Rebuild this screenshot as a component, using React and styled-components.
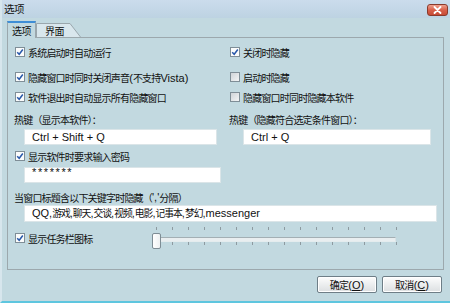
import React from 'react';
import styled, { createGlobalStyle } from 'styled-components';

const Global = createGlobalStyle`
  html, body { margin: 0; padding: 0; }
  body {
    font-family: "Liberation Sans", "Noto Sans CJK SC", sans-serif;
    font-size: 11px;
    color: #111;
    background: #c2d9e0;
  }
`;

const Han = styled.span`
  font-family: "Noto Sans CJK SC", sans-serif;
  font-size: var(--han-size, 10px);
  letter-spacing: var(--han-ls, -0.8px);
`;

const CJK_RE = /([\u3000-\u303f\u3400-\u9fff\uff00-\uffef]+)/;
function mix(text) {
  return text
    .split(CJK_RE)
    .filter(Boolean)
    .map((part, i) =>
      CJK_RE.test(part) ? <Han key={i}>{part}</Han> : <React.Fragment key={i}>{part}</React.Fragment>
    );
}

const Window = styled.div`
  width: 450px;
  height: 303px;
  box-sizing: border-box;
  display: flex;
  flex-direction: column;
  background: #c2d9e0;
  border-left: 2px solid #d7e6ed;
  border-bottom: 2px solid #5ec6df;
  overflow: hidden;
`;

const TitleBar = styled.div`
  height: 18px;
  flex: none;
  display: flex;
  align-items: center;
  justify-content: space-between;
  padding: 0 2px 0 2px;
  background: linear-gradient(#cbdcec, #bdd3e2);
  --han-size: 10.5px;
  --han-ls: -0.4px;
`;

const TitleText = styled.span`
  line-height: 16px;
`;

const CloseButton = styled.div`
  width: 21px;
  height: 12px;
  box-sizing: border-box;
  border: 1px solid #8a3a2c;
  border-radius: 3px;
  background: linear-gradient(#eea08e, #d9604a 50%, #c64a35);
  display: flex;
  align-items: center;
  justify-content: center;
  margin-top: 1px;
`;

const TabStrip = styled.div`
  margin-top: 3px;
  padding-left: 5px;
  height: 16px;
  display: flex;
  align-items: flex-end;
  flex: none;
  --han-size: 10px;
  --han-ls: -0.6px;
`;

const ActiveTab = styled.div`
  position: relative;
  z-index: 1;
  width: 29px;
  height: 17px;
  box-sizing: border-box;
  margin-bottom: -1px;
  border: 1px solid #9aa7ad;
  border-top: 2px solid #3e8ed6;
  border-bottom: none;
  background: #c2d9e0;
  display: flex;
  align-items: center;
  justify-content: center;
  padding-bottom: 1px;
`;

const InactiveTab = styled.div`
  position: relative;
  width: 45px;
  height: 14px;
  display: flex;
  align-items: center;
  padding-left: 9px;
  box-sizing: border-box;
`;

const TabShape = styled.svg`
  position: absolute;
  left: 0;
  top: 0;
`;

const TabLabel = styled.span`
  position: relative;
`;

const Panel = styled.div`
  margin-left: 5px;
  width: 437px;
  height: 233px;
  flex: none;
  box-sizing: border-box;
  border: 1px solid #9ca8ad;
  padding: 6px 0 0 7px;
  display: flex;
  flex-direction: column;
`;

const TwoCol = styled.div`
  display: grid;
  grid-template-columns: 215px 1fr;
  margin-top: ${(p) => p.$mt || 0}px;
`;

const CheckRow = styled.label`
  display: flex;
  align-items: center;
  height: 16px;
  gap: 3px;
  margin-top: ${(p) => p.$mt || 0}px;
  white-space: nowrap;
`;

const Box = styled.span`
  width: 10px;
  height: 10px;
  flex: none;
  box-sizing: border-box;
  border: 1px solid #7f8e97;
  background: ${(p) => (p.$checked ? '#fbfcfc' : 'linear-gradient(135deg, #cfd4d8, #f4f5f6)')};
  display: flex;
  align-items: center;
  justify-content: center;
`;

const Label = styled.div`
  height: 16px;
  display: flex;
  align-items: center;
  white-space: nowrap;
  margin-left: ${(p) => p.$ml || 0}px;
  margin-top: ${(p) => p.$mt || 0}px;
`;

const Field = styled.div`
  height: ${(p) => p.$h || 16}px;
  width: ${(p) => p.$w}px;
  margin-left: ${(p) => p.$ml}px;
  margin-top: ${(p) => p.$mt || 0}px;
  box-sizing: border-box;
  background: #fff;
  border: 1px solid #dbe5e8;
  padding-left: 7px;
  line-height: ${(p) => (p.$h || 16) - 2}px;
  font-size: 11px;
  white-space: nowrap;
  overflow: hidden;
  --han-size: 9.8px;
  --han-ls: -1px;
`;

const Masked = styled.span`
  letter-spacing: 1.6px;
  line-height: 9px;
  display: block;
  font-size: 11px;
`;

const SliderRow = styled.div`
  display: grid;
  grid-template-columns: 137px 1fr;
  height: 28px;
  align-items: start;
`;

const Slider = styled.div`
  position: relative;
  width: 246px;
  height: 28px;
`;

const Ticks = styled.div`
  position: absolute;
  left: 4px;
  top: ${(p) => p.$top}px;
  width: 241px;
  height: 3px;
  background: repeating-linear-gradient(90deg, #8d9aa0 0 1px, transparent 1px 16px);
`;

const Track = styled.div`
  position: absolute;
  left: 3px;
  top: 15px;
  width: 241px;
  height: 5px;
  box-sizing: border-box;
  border: 1px solid #a3afb4;
  border-right-color: #d9e3e6;
  border-bottom-color: #e4ecee;
  background: #e9eef0;
`;

const Thumb = styled.div`
  position: absolute;
  left: 0;
  top: 11px;
  width: 9px;
  height: 16px;
  box-sizing: border-box;
  border: 1px solid #7e8d95;
  border-radius: 2px;
  background: linear-gradient(90deg, #ffffff, #eef1f2);
`;

const ButtonBar = styled.div`
  display: flex;
  justify-content: flex-end;
  gap: 5px;
  margin-top: 6px;
  padding-right: 8px;
  --han-size: 10px;
  --han-ls: -0.7px;
`;

const Button = styled.div`
  width: 60px;
  height: 17px;
  box-sizing: border-box;
  border: 1px solid #6e7e87;
  border-radius: 2px;
  background: linear-gradient(#fdfdfd, #eceeef 50%, #dcdfe1);
  box-shadow: inset 0 0 0 1px #ffffff;
  display: flex;
  align-items: center;
  justify-content: center;
  white-space: nowrap;
`;

const Key = styled.span`
  text-decoration: underline;
`;

function Check({ checked, text, mt }) {
  return (
    <CheckRow $mt={mt}>
      <Box $checked={checked}>
        {checked && (
          <svg width="8" height="8" viewBox="0 0 8 8">
            <polyline points="1.2,4.2 3.2,6.3 6.8,1.5" fill="none" stroke="#2858aa" strokeWidth="1.5" />
          </svg>
        )}
      </Box>
      <span>{mix(text)}</span>
    </CheckRow>
  );
}

export default function App() {
  return (
    <>
      <Global />
      <Window>
        <TitleBar>
          <TitleText>{mix('选项')}</TitleText>
          <CloseButton>
            <svg width="9" height="8" viewBox="0 0 9 8">
              <path d="M1.5 1 L7.5 7 M7.5 1 L1.5 7" stroke="#ffffff" strokeWidth="1.8" strokeLinecap="round" />
            </svg>
          </CloseButton>
        </TitleBar>
        <TabStrip>
          <ActiveTab>{mix('选项')}</ActiveTab>
          <InactiveTab>
            <TabShape width="45" height="14" viewBox="0 0 45 14">
              <path d="M0.5 14 L0.5 0.5 L34 0.5 L44.5 14" fill="#d9e7ed" stroke="#9aa7ad" />
            </TabShape>
            <TabLabel>{mix('界面')}</TabLabel>
          </InactiveTab>
        </TabStrip>
        <Panel>
          <TwoCol>
            <Check checked text="系统启动时自动运行" />
            <Check checked text="关闭时隐藏" />
          </TwoCol>
          <TwoCol $mt={9}>
            <Check checked text="隐藏窗口时同时关闭声音(不支持Vista)" />
            <Check text="启动时隐藏" />
          </TwoCol>
          <TwoCol $mt={4}>
            <Check checked text="软件退出时自动显示所有隐藏窗口" />
            <Check text="隐藏窗口时同时隐藏本软件" />
          </TwoCol>
          <TwoCol $mt={6}>
            <Label $ml={-1}>{mix('热键（显示本软件）：')}</Label>
            <Label $ml={-1}>{mix('热键（隐藏符合选定条件窗口）：')}</Label>
          </TwoCol>
          <TwoCol $mt={2}>
            <Field $w={193} $ml={9}>Ctrl + Shift + Q</Field>
            <Field $w={188} $ml={13}>Ctrl + Q</Field>
          </TwoCol>
          <Check checked mt={3} text="显示软件时要求输入密码" />
          <Field $w={197} $ml={9} $mt={3}>
            <Masked>*******</Masked>
          </Field>
          <Label $mt={6} $ml={-1}>{mix('当窗口标题含以下关键字时隐藏（\',\'分隔）')}</Label>
          <Field $w={413} $ml={9} $h={17}>
            {mix('QQ,游戏,聊天,交谈,视频,电影,记事本,梦幻,messenger')}
          </Field>
          <SliderRow>
            <Check checked mt={8} text="显示任务栏图标" />
            <Slider>
              <Ticks $top={5} />
              <Track />
              <Ticks $top={20} />
              <Thumb />
            </Slider>
          </SliderRow>
        </Panel>
        <ButtonBar>
          <Button>
            {mix('确定')}(<Key>O</Key>)
          </Button>
          <Button>
            {mix('取消')}(<Key>C</Key>)
          </Button>
        </ButtonBar>
      </Window>
    </>
  );
}
